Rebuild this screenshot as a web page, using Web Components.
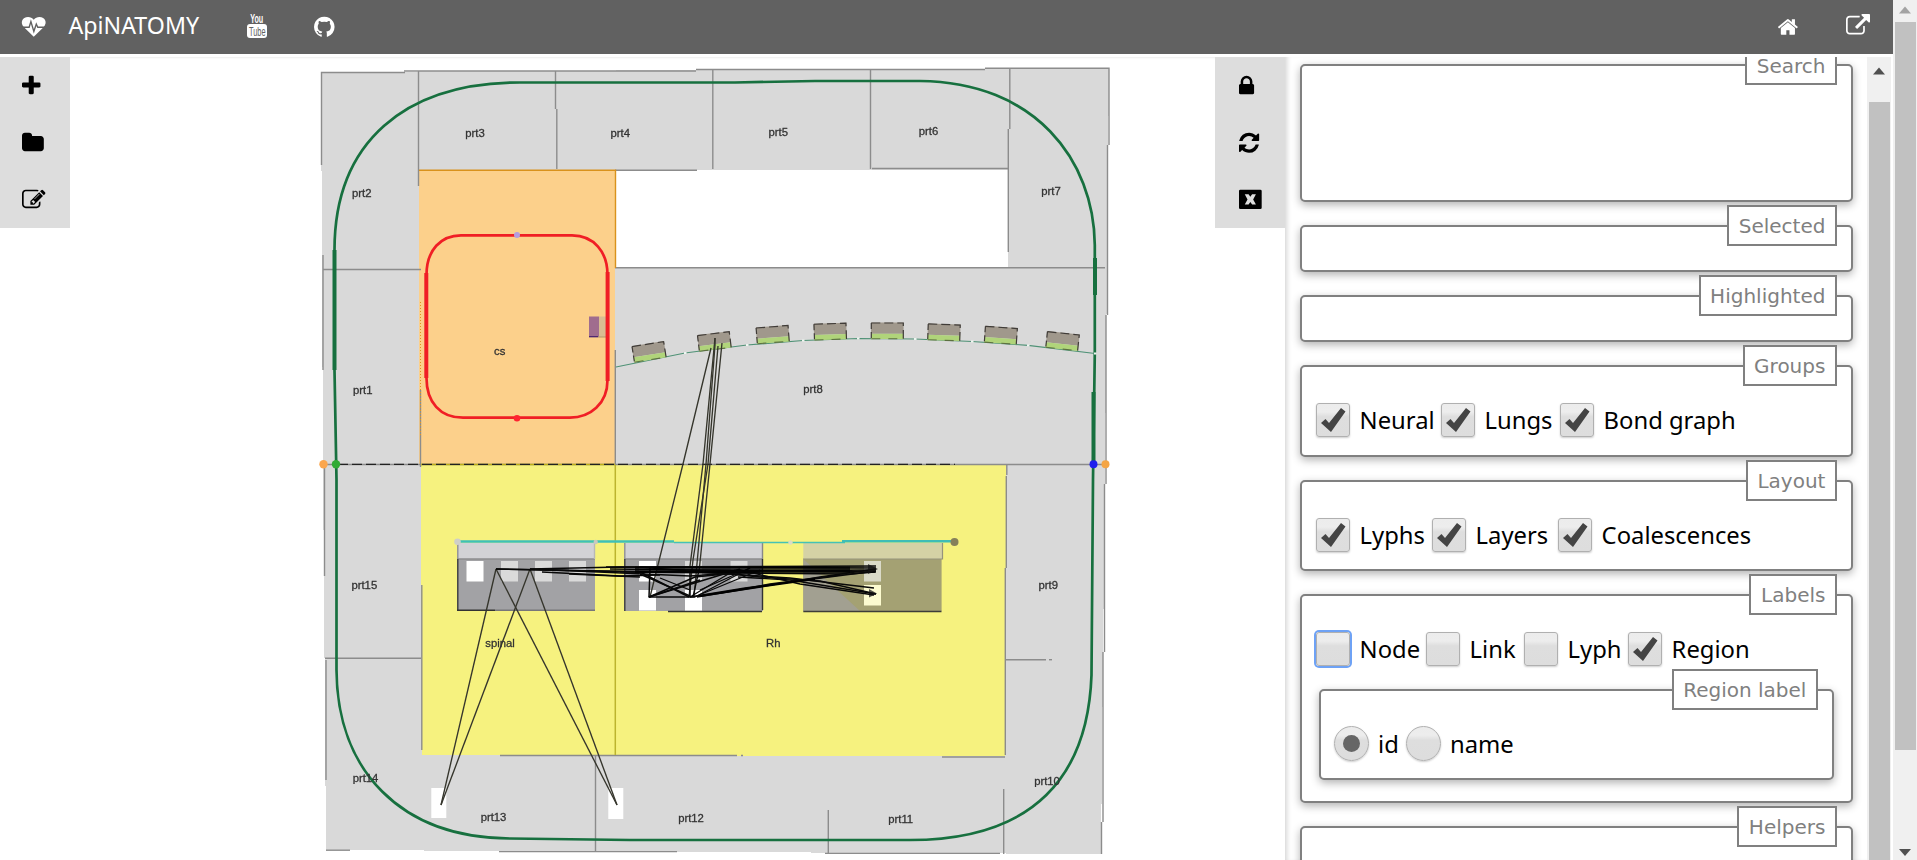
<!DOCTYPE html>
<html lang="en"><head><meta charset="utf-8"><title>ApiNATOMY</title>
<style>
html,body{margin:0;height:860px;overflow:hidden;background:#fff;font-family:"DejaVu Sans",Verdana,sans-serif}
</style></head><body>
<api-app></api-app>
<script>
const ICONS={
plus:['192 0 1408 1792','<path d="M1600 736v192q0 40-28 68t-68 28h-416v416q0 40-28 68t-68 28h-192q-40 0-68-28t-28-68v-416h-416q-40 0-68-28t-28-68v-192q0-40 28-68t68-28h416v-416q0-40 28-68t68-28h192q40 0 68 28t28 68v416h416q40 0 68 28t28 68z"/>'],
folder:['64 0 1664 1792','<path d="M1728 608v704q0 92-66 158t-158 66h-1216q-92 0-158-66t-66-158v-960q0-92 66-158t158-66h320q92 0 158 66t66 158v32h672q92 0 158 66t66 158z"/>'],
edit:['0 0 1792 1792','<path d="M888 1184l116-116-152-152-116 116v56h96v96h56zm440-720q-16-16-33 1l-350 350q-17 17-1 33t33-1l350-350q17-17 1-33zm80 594v190q0 119-84.5 203.5t-203.5 84.5h-832q-119 0-203.5-84.5t-84.5-203.5v-832q0-119 84.5-203.5t203.5-84.5h832q63 0 117 25 15 7 18 23 3 17-9 29l-49 49q-14 14-32 8-23-6-45-6h-832q-66 0-113 47t-47 113v832q0 66 47 113t113 47h832q66 0 113-47t47-113v-126q0-13 9-22l64-64q15-15 35-7t20 29zm-96-738l288 288-672 672h-288v-288zm444 132l-92 92-288-288 92-92q28-28 68-28t68 28l152 152q28 28 28 68t-28 68z"/>'],
lock:['320 0 1152 1792','<path d="M640 768h512v-192q0-106-75-181t-181-75-181 75-75 181v192zm832 96v576q0 40-28 68t-68 28h-960q-40 0-68-28t-28-68v-576q0-40 28-68t68-28h32v-192q0-184 132-316t316-132 316 132 132 316v192h32q40 0 68 28t28 68z"/>'],
refresh:['128 0 1536 1792','<path d="M1639 1056q0 5-1 7-64 268-268 434.5t-478 166.5q-146 0-282.5-55t-243.5-157l-129 129q-19 19-45 19t-45-19-19-45v-448q0-26 19-45t45-19h448q26 0 45 19t19 45-19 45l-137 137q71 66 161 102t187 36q134 0 250-65t186-179q11-17 53-117 8-23 30-23h192q13 0 22.5 9.5t9.5 22.5zm25-800v448q0 26-19 45t-45 19h-448q-26 0-45-19t-19-45 19-45l138-138q-148-137-349-137-134 0-250 65t-186 179q-11 17-53 117-8 23-30 23h-199q-13 0-22.5-9.5t-9.5-22.5v-7q65-268 270-434.5t480-166.5q146 0 284 55.5t245 156.5l130-129q19-19 45-19t45 19 19 45z"/>'],
close:['0 0 1792 1792','<path fill-rule="evenodd" d="M100 128h1530q100 0 100 100v1280q0 100-100 100H100Q0 1608 0 1508V228Q0 128 100 128zM440 470L650 868 440 1266H730L865 1060 1000 1266H1290L1080 868 1290 470H1000L865 676 730 470z"/>'],
github:['128 0 1536 1792','<path d="M896 128q209 0 385.5 103t279.5 279.5 103 385.5q0 251-146.5 451.5t-378.5 277.5q-27 5-40-7t-13-30q0-3 .5-76.5t.5-134.5q0-97-52-142 57-6 102.5-18t94-39 81-66.5 53-105 20.5-150.5q0-119-79-206 37-91-8-204-28-9-81 11t-92 44l-38 24q-93-26-192-26t-192 26q-16-11-42.5-27t-83.5-38.5-85-13.5q-45 113-8 204-79 87-79 206 0 85 20.5 150t52.5 105 80.5 67 94 39 102.5 18q-39 36-49 103-21 10-45 15t-57 5-65.5-21.5-55.5-62.5q-19-32-48.5-52t-49.5-24l-20-3q-21 0-29 4.5t-5 11.5 9 14 13 12l7 5q22 10 43.5 38t31.5 51l10 23q13 38 44 61.5t67 30 69.5 7 55.5-3.5l23-4q0 38 .5 88.5t.5 54.5q0 18-13 30t-40 7q-232-77-378.5-277.5t-146.5-451.5q0-209 103-385.5t279.5-279.5 385.5-103z"/>'],
home:['90 0 1612 1792','<path d="M1472 992v480q0 26-19 45t-45 19h-384v-384h-256v384h-384q-26 0-45-19t-19-45v-480q0-1 .5-3t.5-3l575-474 575 474q1 2 1 6zm223-69l-62 74q-8 9-21 11h-3q-13 0-21-7l-692-577-692 577q-12 8-24 7-13-2-21-11l-62-74q-8-10-7-23.5t11-21.5l719-599q32-26 76-26t76 26l244 204v-195q0-14 9-23t23-9h192q14 0 23 9t9 23v408l219 182q10 8 11 21.5t-7 23.5z"/>'],
external:['0 0 1792 1792','<path d="M1408 928v320q0 119-84.5 203.5t-203.5 84.5h-832q-119 0-203.5-84.5t-84.5-203.5v-832q0-119 84.5-203.5t203.5-84.5h704q14 0 23 9t9 23v64q0 14-9 23t-23 9h-704q-66 0-113 47t-47 113v832q0 66 47 113t113 47h832q66 0 113-47t47-113v-320q0-14 9-23t23-9h64q14 0 23 9t9 23zm384-864v512q0 26-19 45t-45 19-45-19l-176-176-652 652q-10 10-23 10t-23-10l-114-114q-10-10-10-23t10-23l652-652-176-176q-19-19-19-45t19-45 45-19h512q26 0 45 19t19 45z"/>'],
heart:['0 0 24 24','<path d="M12 22.3L2 12.6C-2.4 7.8.3 2 6.200 2 8.600 2 10.400 3 12 4.900 13.600 3 15.400 2 17.800 2 23.700 2 26.400 7.800 22 12.600z"/><path d="M.5 12.500H7.300L9.100 6.700 12.100 16.800 14.600 9.200 16.100 12.500H23.500" fill="none" stroke="#616161" stroke-width="1.400"/>'],
youtube:['0 0 20 24','<text x="3.200" y="9" textLength="13" lengthAdjust="spacingAndGlyphs" font-family="Liberation Sans" font-weight="bold" font-size="13">You</text><rect x="0" y="10" width="20" height="14" rx="3"/><text x="2" y="21.800" textLength="16.500" lengthAdjust="spacingAndGlyphs" font-family="Liberation Sans" font-size="13.500" fill="#616161">Tube</text>']
};
function define(name,html,setup){
  customElements.define(name,class extends HTMLElement{
    connectedCallback(){
      if(this.shadowRoot)return;
      const r=this.attachShadow({mode:'open'});
      r.innerHTML=html;
      if(setup)setup.call(this,r);
    }
  });
}
define('api-icon','<style>:host{display:block;height:24px;flex:none}svg{display:block;height:100%;fill:currentColor;overflow:visible}</style>',function(r){
  const [vb,body]=ICONS[this.getAttribute('name')];
  r.innerHTML+=`<svg viewBox="${vb}">${body}</svg>`;
});
define('api-header',`<style>:host{display:flex;height:54px;background:#616161;color:#fff;align-items:flex-start;box-sizing:border-box;padding:14px 23px 0 22px;font:23.200px "Noto Sans","Open Sans",sans-serif}
.t{margin:-5px 48px 0 23px;line-height:33px;width:130px;white-space:nowrap}.g{margin:1px 0 0 47px}.h{margin:1.500px 48px 0 auto;height:22px}</style>
<api-icon name="heart" style="height:23.500px;margin-top:.5px"></api-icon><span class="t">ApiNATOMY</span>
<api-icon name="youtube"></api-icon><api-icon class="g" name="github"></api-icon>
<api-icon class="h" name="home"></api-icon><api-icon name="external" style="margin-top:-.5px"></api-icon>`);
define('api-toolbar',`<style>:host{display:flex;flex-direction:column;width:70px;height:171px;background:#ddd;color:#000;flex:none}
::slotted(*){height:23.500px!important;margin:17px 0 16.500px var(--pad,22px)}</style><slot></slot>`);
define('api-scrollbar',`<style>:host{display:flex;flex-direction:column;align-items:center;width:24px;background:#f0f0f0;position:relative;flex:none;height:100%;box-sizing:border-box;padding-top:var(--start)}
div{width:21px;height:var(--len);background:#c1c1c1}
svg{position:absolute;left:6px;width:12px;height:8px}.u{top:var(--up)}.d{bottom:4px;display:none}:host([down]) .d{display:block}</style>
<svg class="u" viewBox="0 0 12 8"><path d="M0 7.500L6 .5l6 7z" fill="var(--arrow)"/></svg><div></div><svg class="d" viewBox="0 0 12 8"><path d="M0 1h12L6 8z" fill="#505050"/></svg>`);
define('api-fieldset',`<style>:host{display:block;box-sizing:border-box;height:var(--h);border:2px solid #808080;border-radius:5px;box-shadow:0 3px 8px rgba(0,0,0,.3);background:#fff;flex:none}
.l{display:block;box-sizing:border-box;width:fit-content;height:41px;margin:-22px 14px 0 auto;padding:0 9.600px;border:2px solid #808080;background:#fff;color:#808080;font-size:20px;line-height:var(--lh,38px);white-space:nowrap}</style>
<span class="l"></span><slot></slot>`,function(r){r.querySelector('.l').textContent=this.getAttribute('label');});
define('api-option',`<style>:host{display:flex;align-items:center;font:23.800px "Noto Sans","Open Sans",sans-serif;color:#000;height:35px;flex:none;width:var(--w)}
.b{box-sizing:border-box;width:34px;height:34px;border:1px solid #b0b0b0;border-radius:3px;background:linear-gradient(#ececec,#ededed 25%,#dedede 40%,#ddd);box-shadow:0 1px 2px rgba(0,0,0,.2);flex:none;margin-right:9.600px}
:host([radio]) .b{border-radius:50%;width:35px;height:35px;margin-right:9px}
:host([focus]) .b{box-shadow:0 0 0 2px #6ea2f5}
svg{display:none;width:34px;height:34px;margin:-1px}:host([checked]:not([radio])) .c{display:block}:host([checked][radio]) .r{display:block}
.t{line-height:35px;white-space:nowrap;margin-top:1px}</style>
<span class="b"><svg class="c" viewBox="0 0 34 34"><path d="M5 20l4.500-4 3.500 4L25 5l4.500 3.500L15 29z" fill="#444"/></svg><svg class="r" viewBox="0 0 34 34"><circle cx="17.500" cy="17.500" r="8.500" fill="#666"/></svg></span><span class="t"><slot></slot></span>`);
define('api-row',`<style>:host{display:flex;margin:16px 0 0 14px}</style><slot></slot>`);
define('api-settings',`<style>:host{display:block;box-sizing:border-box;width:582px;height:803px;padding:7px 14px 0 15px;overflow:hidden;box-shadow:inset 5px 0 5px -3px rgba(0,0,0,.17);background:#fff;flex:none}
.s{display:flex;flex-direction:column;gap:23px}</style><div class="s">
<api-fieldset label="Search" style="--h:138px;--lh:41px"></api-fieldset>
<api-fieldset label="Selected" style="--h:47px"></api-fieldset>
<api-fieldset label="Highlighted" style="--h:47px"></api-fieldset>
<api-fieldset label="Groups" style="--h:92px"><api-row><api-option checked style="--w:125px">Neural</api-option><api-option checked style="--w:119px">Lungs</api-option><api-option checked>Bond graph</api-option></api-row></api-fieldset>
<api-fieldset label="Layout" style="--h:91px"><api-row><api-option checked style="--w:116px">Lyphs</api-option><api-option checked style="--w:126px">Layers</api-option><api-option checked>Coalescences</api-option></api-row></api-fieldset>
<api-fieldset label="Labels" style="--h:209px"><api-row><api-option focus style="--w:110px">Node</api-option><api-option style="--w:98px">Link</api-option><api-option style="--w:104px">Lyph</api-option><api-option checked>Region</api-option></api-row>
<api-fieldset label="Region label" style="--h:91px;margin:23px 17px 0"><api-row style="margin-left:13px"><api-option radio checked style="--w:72px">id</api-option><api-option radio>name</api-option></api-row></api-fieldset></api-fieldset>
<api-fieldset label="Helpers" style="--h:92px"></api-fieldset></div>`);
define('api-graph',`<style>:host{display:block;width:1145px;height:803px;flex:none;box-sizing:border-box;overflow:hidden;box-shadow:inset 0 2px 2px -1px #eee}svg{display:block}
.n{shape-rendering:crispEdges}text{font:11.300px "Liberation Sans",Arial,sans-serif;text-anchor:middle;fill:#333;stroke:#333;stroke-width:.3px;filter:blur(.65px)}</style><svg width="1145" height="803" viewBox="70 57 1145 803"></svg>`,function(r){
  const ln=(pts,c='#8c8c8c',w=1.4,x='')=>`<polyline points="${pts}" fill="none" stroke="${c}" stroke-width="${w}" ${x}/>`;
  const rc=(x,y,w,h,f,e='')=>`<rect x="${x}" y="${y}" width="${w}" height="${h}" fill="${f}" ${e}/>`;
  let s='<g class="n"><path d="M321 72L1109 68 1105 464 1101 854 326 850 323 464z" fill="#d9d9d9"/>';
  s+=rc(615,169.5,393,98,'#fff')+rc(419,170,196,294,'#fcd08b')+'<path d="M420.500 465H1006.500L1005.500 756 422.500 755z" fill="#f6f27f"/></g><g>';
  [['321.500,165 321.500,72.500 405,72.500'],['404,71 696,71'],['696,69.500 985,69.500'],['985,68.300 1109,68.300 1109,145'],['1107.500,145 1107.500,315'],['1106,315 1106,484'],['1104.500,484 1104.500,652'],['1103,652 1103,822'],['1101.500,822 1101.500,854'],
  ['323,255 323,370'],['324.500,465 324.500,576'],['326,660 326,780'],['418.500,71 418.500,186'],['555.500,71 555.500,109'],['556.800,109 556.800,169'],['712.800,70 712.800,169'],['870.500,69 870.500,169'],['1009.800,68 1009.800,129'],['1008.300,129 1008.300,252'],
  ['615,170.300 697,170.300'],['872,168.500 1008,168.500'],['323,269.500 421,269.500'],['615,267.700 1105,267.700'],['323,464.500 1106,464.500'],['420.500,390 420.500,467'],['615.300,350 615.300,464'],['1006.800,465 1006.800,475'],['1006.300,476 1006.300,568'],['1005.300,568 1005.300,755'],['421.800,585 421.800,750'],
  ['325,658.300 421,658.300'],['1006,659.700 1046,659.700'],['1049,659.700 1052,659.700'],['500,755.500 737,755.500'],['741,755.500 743,755.500'],['942,757 1005,757'],['595.500,755 595.500,851'],['828.300,810 828.300,853'],['1003.700,789 1003.700,854'],['326,850.200 350,850.200'],['499,851.600 677,851.600'],['825,853.400 1000,853.400']].forEach(a=>s+=ln(...a));
  s+=ln('419,170.300 615.500,170.300 615.500,268','#d9921c',1.4)+ln('420.500,302 420.500,435','#e0941e',1,'stroke-dasharray="1 2"');
  s+=ln('615.300,465 615.300,755','#bcb42e',1.5)+ln('421,464.500 615,464.500','#bcae18',1.5)+ln('338,464.400 955,464.400','#222',1.4,'stroke-dasharray="10 4"');
  // outer vessel loop
  s+='<path d="M520 82.500C405 82.500 334.500 142 334.500 250V370L336.500 480V670C337 770 400 838 510 838.500L630 840H910C1035 840 1088 775 1091.500 675L1093 480 1094.800 353V245C1094 160 1035 82 920 81H815L735 82.500z" fill="none" stroke="#17703f" stroke-width="2.700"/>'+ln('334.500,250 334.500,370','#17703f',4)+ln('1095,258 1095,295','#17703f',4)+ln('1093.500,392 1093.500,464','#17703f',4);
  // heart circuit
  s+=rc(589,316.500,10,20.500,'#a06d8e')+rc(599,316.500,7,20.500,'#d9bd92')+ln('589,336.700 598,336.700','#4a2570',1.3)+ln('598,337 606,337','#b0966a',1);
  s+='<path d="M461 235.300H572C594 235.300 607.500 252 607.500 275V380C607.500 404 590 417.700 570 417.700H463C440 417.700 426.500 402 426.500 378V275C426.500 250 441 235.300 461 235.300z" fill="none" stroke="#f01e25" stroke-width="2.700"/>'+ln('426.300,273 426.300,378','#f01e25',4)+ln('607.600,272 607.600,381','#f01e25',4)+'</g>';
  // alveoli chain
  s+='<g>'+ln('616,367 685,353 747,345 803,340.500 858,338.500 915,339 972,341.500 1028,345.300 1095,353.500','#4f9276',1.2);
  [[685,353],[747,345],[803,340.500],[858,338.500],[915,339],[972,341.500],[1028,345.300],[1095,353.500]].forEach(p=>s+=rc(p[0]-1,p[1]-1,2.5,2,'#eef5f0'));
  s+='</g>';
  [[650.3,359.7,-9],[715.3,349.3,-7],[773.3,342.5,-4.5],[830.5,339.5,-2],[887.3,338.8,0],[943.7,340.3,2],[1000.3,343.2,4],[1061.7,349,6]].forEach(([x,y,a])=>{
    s+=`<g transform="translate(${x} ${y}) rotate(${a})">`+rc(-16.3,-16.3,32.6,11.300,'#a0988c')+rc(-16.3,-5,32.6,5.200,'#b0d47a')+ln('-16,-15.800 16,-15.800 16,0','#403c38',1.2,'stroke-dasharray="9 4"')+ln('-16,-15.800 -16,0','#403c38',1.2,'stroke-dasharray="6 3"')+ln('-16,0 16,0','#5c7040',1.1,'stroke-dasharray="9 8"')+'</g>';});
  // neural tissue blocks
  s+='<g>';
  [[457.300,137.700],[624.300,138.700]].forEach(([x,w])=>{s+=rc(x,543,w,16,'#d2d2d6')+rc(x,559,w,52,'#a2a2a5')+ln(`${x},559 ${x+w},559`,'#8c8c8f')+ln(`${x+.5},543 ${x+.5},559`,'#909093')+ln(`${x+.5},559 ${x+.5},611`,'#3c3c3e');});
  s+=ln('457,610.300 495,610.300','#333')+ln('495,610.300 595,610.300','#77777a')+ln('668,611.500 762,611.500','#333')+ln('762.500,543 762.500,559','#888')+ln('762.500,559 762.500,610','#333')+ln('594.500,543 594.500,559','#b8b8b8');
  s+=rc(803.300,543,138.700,16,'#d5d2a5')+rc(803.300,559,138.300,52,'#a4a173')+'<path d="M803.300 559L860 611H803.300z" fill="#a2a091"/>'+ln('803,559 942.500,559 942.500,543','#95937c',1.2)+ln('803.300,611.500 941.500,611.500','#3d3c39',1.5);
  [[466.500,561,'#fff'],[501,561,'#dadada'],[535,561,'#dadada'],[569,561,'#dadada'],[639,561,'#fff'],[639,590,'#fff'],[685,561,'#dadada'],[685,590,'#fff'],[730.500,561,'#dadada'],[864,561,'#dadac8'],[864,585,'#fcfbd0']].forEach(([x,y,c])=>s+=rc(x,y,17,20.500,c));
  s+=rc(431.300,788,15,30,'#fff')+rc(608.300,788,15,31,'#fff');
  s+=ln('460,541.500 674,541.500','#3fc0b8',2.6)+ln('674,542.500 845,542.500','#45c2b5',1.3)+ln('842,541.300 952,541.300','#3fbdb6',2.6)+'</g>';
  // connections
  s+='<g stroke-linejoin="round">';
  ['496,569 441,805','530,569 441,805','496,569 617,805','530,569 617,805','711,348 683,464 650,597','715,338 703,464 690,566','715,338 715,345 706,464 694,597','722,343 710,464 699,572','718,346 708,464 693,560 689,597'].forEach(p=>s+=ln(p,'#35352c',1.35));
  ['496,569 640,572 876,570','496,569 605,571 760,573','530,569 620,567 876,568','530,569 690,576 760,571','542,572 620,576 660,575','569,574 640,577','606,567 876,566','610,569 876,572','620,572 850,574 875,572','640,567 700,572 790,578 874,588','640,574 690,596','640,572 689,597','650,568 649,597 695,597','649,597 740,569','649,597 695,577 735,573','649,597 700,580','690,596 690,571','693,597 699,570','690,597 735,570','695,597 750,568','699,595 760,570','690,597 745,588 790,582 876,571','697,597 765,586 820,577 876,569','720,593 770,584 840,575','740,570 800,584 874,595','738,577 790,580 876,594','690,570 760,577 820,581 876,594','660,578 690,590','700,590 750,568'].forEach((p,i)=>s+=ln(p,'#080808',i<17?1.5:1.3));
  s+=rc(635,566.500,215,6.500,'#000','opacity=".75"')+ln('700,596 765,586 815,579','#000',2.2)+'<path d="M868 564l10 5-10 5zM869 589l8 4.500-8 4z" fill="#111" fill-opacity=".7"/></g>';
  [[517,235,'#b49ce0',3],[517,418.3,'#ff2430',3.3],[323.500,464.3,'#fba64d',4.2],[336,464.2,'#31ab35',4.2],[1093.500,464.3,'#2020ee',4],[1105.500,464.3,'#f4a545',4],[457.500,541.700,'#cfcfc8',3.300],[595.700,542,'#c9c9c0',2.200],[790.500,542.500,'#dcdcc4',2.200],[954.500,542,'#85805a',4]].forEach(([x,y,c,q])=>s+=`<circle cx="${x}" cy="${y}" r="${q}" fill="${c}"/>`);
  [['prt3',475,134],['prt4',620.3,133.5],['prt5',778.3,133],['prt6',928.5,132],['prt7',1051,191.5],['prt2',361.7,194],['prt1',362.7,390.5],['prt8',813,390],['cs',499.7,351.5],['spinal',500,643.7],['Rh',773.3,644],['prt15',364.3,585.7],['prt14',365.500,778.7],['prt13',493.500,817.7],['prt12',691,819],['prt11',900.7,819.500],['prt9',1048.3,586],['prt10',1047,781.7]].forEach(([t,x,y])=>s+=`<text x="${x}" y="${y+3}">${t}</text>`);
  r.querySelector('svg').innerHTML=s;
});
define('api-app',`<style>:host{display:flex;width:1917px;height:860px;overflow:hidden;background:#fff}
.m{display:flex;flex-direction:column;width:1893px;flex:none}.b{display:flex;padding-top:3px;height:803px}</style>
<div class="m"><api-header></api-header><div class="b">
<api-toolbar><api-icon name="plus"></api-icon><api-icon name="folder"></api-icon><api-icon name="edit"></api-icon></api-toolbar>
<api-graph></api-graph>
<api-toolbar style="--pad:23.500px"><api-icon name="lock"></api-icon><api-icon name="refresh"></api-icon><api-icon name="close"></api-icon></api-toolbar>
<api-settings></api-settings>
<api-scrollbar style="--start:45px;--len:758px;--up:10px;--arrow:#505050"></api-scrollbar>
</div></div><api-scrollbar down style="--start:22px;--len:728px;--up:6px;--arrow:#a3a3a3"></api-scrollbar>`);
</script></body></html>
